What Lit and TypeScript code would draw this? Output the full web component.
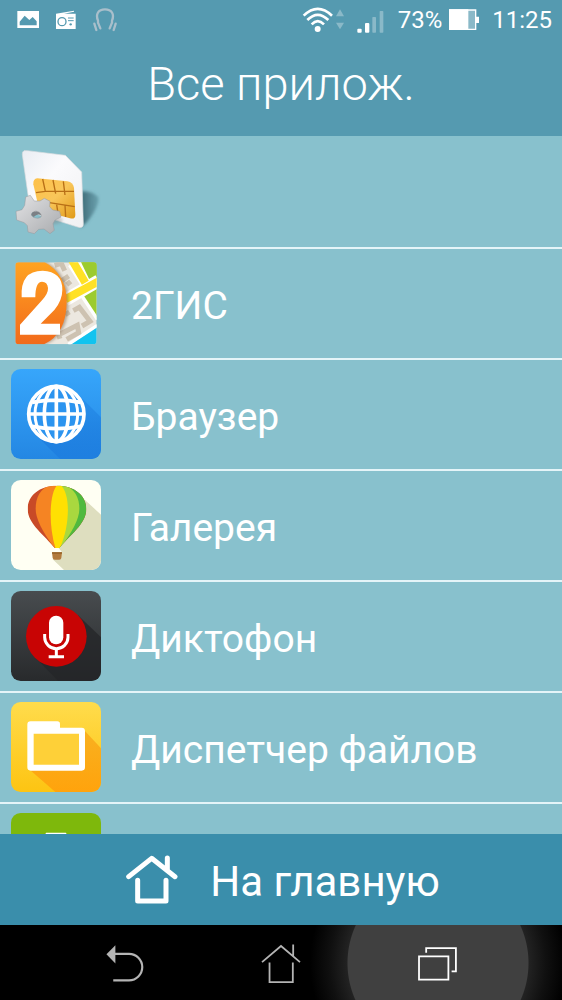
import { LitElement, html, css, TemplateResult } from "lit";
import { customElement } from "lit/decorators.js";

interface AppEntry {
  name: string;
  label?: string;
  icon: TemplateResult;
}

const simIcon = html`<svg viewBox="33 33 270 270" aria-hidden="true">
  <defs>
    <linearGradient id="sg" x1="0" y1="0" x2="1" y2="1"><stop offset="0" stop-color="#fdc14a" /><stop offset=".5" stop-color="#f9c65a" /><stop offset="1" stop-color="#e09a18" /></linearGradient>
    <linearGradient id="sc" x1="0" y1="0" x2="1" y2="1"><stop offset="0" stop-color="#e9edf3" /><stop offset=".4" stop-color="#fbfbfd" /><stop offset="1" stop-color="#f0f0f2" /></linearGradient>
    <linearGradient id="sh" x1="0" y1="0" x2="1" y2="0"><stop offset="0" stop-color="#35616d" stop-opacity=".95" /><stop offset="1" stop-color="#4c7f8d" stop-opacity=".5" /></linearGradient>
    <linearGradient id="gr" x1="0" y1="0" x2="1" y2="1"><stop offset="0" stop-color="#e3e3e5" /><stop offset="1" stop-color="#a9abae" /></linearGradient>
    <filter id="bl" x="-20%" y="-20%" width="140%" height="140%"><feGaussianBlur stdDeviation="4" /></filter>
  </defs>
  <path d="M244 166 Q278 164 295 184 Q298 202 280 232 Q262 262 240 275Z" fill="url(#sh)" filter="url(#bl)" />
  <path d="M72 44 Q66 47 67 56 L88 205 Q90 226 106 233 L236 274 Q250 277 250 264 L245 108 L196 58 L82 44Z" fill="url(#sc)" stroke="#d9dde0" stroke-width="2" />
  <path d="M112 127 L202 136 Q220 139 222 156 L226 236 Q226 251 210 247 L140 228 Q118 222 114 206 L100 145 Q99 128 112 127Z" fill="url(#sg)" />
  <path d="M128 129 L136 166 H222 M159 132 L167 173 M190 136 L195 177 M136 166 L108 170 M148 200 L224 212 M170 206 L174 232 M195 208 L197 243" fill="none" stroke="#b86f16" stroke-width="4" />
  <ellipse cx="150" cy="252" rx="38" ry="14" fill="#777" opacity=".35" filter="url(#bl)" />
  <path fill-rule="evenodd" fill="url(#gr)" stroke="#96999c" stroke-width="1.5" d="M77 183 L91 178 L103 195 L120 195 L133 187 L150 196 L149 212 L158 222 L179 226 L183 243 L165 252 L159 263 L163 283 L150 293 L132 279 L116 280 L103 293 L84 288 L82 269 L73 260 L50 252 L48 226 L66 221 L74 208Z M94 237 Q98 247 113 247 Q126 245 124 236 Q119 225 107 225 Q94 228 94 237Z" />
  <path d="M94 237 Q95 226 109 226 Q121 228 124 238 Q112 231 101 243 Z" fill="#7c8085" />
</svg>`;

const gisIcon = html`<svg viewBox="33 24 270 270" aria-hidden="true">
  <defs>
    <clipPath id="gc"><rect x="46" y="37" width="244" height="246" rx="10" /></clipPath>
    <linearGradient id="go" x1="0" y1="0" x2="0" y2="1"><stop offset="0" stop-color="#ffa321" /><stop offset="1" stop-color="#f26a1b" /></linearGradient>
    <filter id="gb"><feGaussianBlur stdDeviation="5" /></filter>
  </defs>
  <g clip-path="url(#gc)">
    <rect x="46" y="37" width="244" height="246" fill="#ece8e0" />
    <path d="M228 37 H290 V88 L268 96Z M290 106 V206 L248 142Z" fill="#9ccb2f" />
    <path d="M222 37 L262 100 L290 80" fill="none" stroke="#fff" stroke-width="42" />
    <path d="M240 30 H300 V84 L272 97Z" fill="#9ccb2f" />
    <path d="M196 150 L296 92" stroke="#fff" stroke-width="38" />
    <path d="M216 30 L256 98 M196 148 L296 94" fill="none" stroke="#ffe126" stroke-width="24" />
    <path d="M246 138 L292 208" stroke="#fff" stroke-width="10" />
    <path d="M212 283 L290 232 V283Z" fill="#12c3ef" />
    <path d="M205 283 L292 226" stroke="#fff" stroke-width="10" />
    <g fill="none" stroke="#cdc2b1" stroke-width="15">
      <path d="M164 46 L184 40 L194 62 M186 92 L206 78 M200 104 L212 94" />
      <path d="M220 182 L238 172 L270 214 L246 228 M180 266 L176 254 L232 226 L236 248 L200 268 M206 196 L198 184" />
    </g>
    <path d="M46 37 H138 A112 124 0 0 1 206 155 Q206 250 138 283 H46Z" fill="#6b5035" opacity=".45" filter="url(#gb)" />
    <path d="M46 37 H134 A112 124 0 0 1 200 155 Q200 250 132 283 H46Z" fill="url(#go)" />
    <path d="M65 142 Q60 62 128 62 Q187 65 187 119 Q187 151 163 180 L122 221 H180 V254 H60 V224 L126 151 Q145 130 144 114 Q142 95 126 95 Q106 96 106 142Z" fill="#fff" />
  </g>
</svg>`;

const browserIcon = html`<svg viewBox="33 27 270 270" aria-hidden="true">
  <defs>
    <linearGradient id="bb" x1="0" y1="0" x2="0" y2="1"><stop offset="0" stop-color="#37a6fb" /><stop offset="1" stop-color="#2487e3" /></linearGradient>
    <linearGradient id="bs" x1="0" y1="0" x2="0" y2="1"><stop offset="0" stop-color="#1d7fe0" stop-opacity=".35" /><stop offset="1" stop-color="#1f7fe0" /></linearGradient>
    <clipPath id="bc"><rect x="33" y="27" width="270" height="270" rx="29" /></clipPath>
  </defs>
  <g clip-path="url(#bc)">
    <rect x="33" y="27" width="270" height="270" fill="url(#bb)" />
    <path d="M231 100 L303 172 V297 H180 L107 224Z" fill="url(#bs)" />
    <circle cx="169" cy="162" r="83" fill="#2c94ef" />
    <g fill="none" stroke="#fff" stroke-width="11">
      <circle cx="169" cy="162" r="83" />
      <ellipse cx="169" cy="162" rx="36" ry="83" />
      <ellipse cx="169" cy="162" rx="64" ry="83" stroke-width="9" />
      <path d="M169 79 V245 M86 162 H252 M96 127 Q169 114 242 127 M96 199 Q169 213 242 199" />
    </g>
  </g>
</svg>`;

const galleryIcon = html`<svg viewBox="33 30 270 270" aria-hidden="true">
  <defs>
    <clipPath id="lc"><rect x="33" y="30" width="270" height="270" rx="29" /></clipPath>
    <clipPath id="lb"><path d="M171 47 C224 47 259 77 259 117 C259 163 207 197 178 234 H164 C136 197 83 163 83 117 C83 77 118 47 171 47Z" /></clipPath>
  </defs>
  <g clip-path="url(#lc)">
    <rect x="33" y="30" width="270" height="270" fill="#fffff3" />
    <path d="M255 90 L303 134 V300 H192 L158 268 L186 247 L176 234Z" fill="#dedebf" />
    <g clip-path="url(#lb)">
      <rect x="80" y="40" width="190" height="200" fill="#c84a27" />
      <path d="M171 40 Q107 50 107 117 Q107 160 168 240 H185 V40Z" fill="#f58423" />
      <path d="M171 40 H270 V240 H171Z" fill="#4fb93e" />
      <path d="M171 40 Q238 50 238 117 Q238 160 176 240 H171Z" fill="#a9d83f" />
      <path d="M177 42 C148 55 143 165 168 240 H177 C213 165 212 60 177 42Z" fill="#ffe002" />
    </g>
    <path d="M156 247 H186 L184 264 Q183 269 178 269 H164 Q159 269 158 264Z" fill="#b27a3c" />
    <path d="M156 247 H186 V251 H156Z" fill="#966329" />
  </g>
</svg>`;

const micIcon = html`<svg viewBox="33 33 270 270" aria-hidden="true">
  <defs>
    <linearGradient id="mb" x1="0" y1="0" x2="0" y2="1"><stop offset="0" stop-color="#484c4f" /><stop offset="1" stop-color="#282a2c" /></linearGradient>
    <clipPath id="mc"><rect x="33" y="33" width="270" height="270" rx="29" /></clipPath>
  </defs>
  <g clip-path="url(#mc)">
    <rect x="33" y="33" width="270" height="270" fill="url(#mb)" />
    <path d="M234 106 L303 172 V303 H175 L105 232Z" fill="#242628" opacity=".75" />
    <circle cx="169" cy="169" r="91" fill="#c80404" />
    <rect x="147" y="107" width="43" height="86" rx="21" fill="#fff" />
    <path d="M134 162 V172 A35 34 0 0 0 204 172 V162" fill="none" stroke="#fff" stroke-width="9" />
    <path d="M169 205 V230 M146 230 H192" stroke="#fff" stroke-width="9" />
  </g>
</svg>`;

const filesIcon = html`<svg viewBox="33 36 270 270" aria-hidden="true">
  <defs>
    <linearGradient id="fb" x1="0" y1="0" x2="0" y2="1"><stop offset="0" stop-color="#ffdc4c" /><stop offset="1" stop-color="#fdc412" /></linearGradient>
    <linearGradient id="fs" x1="0" y1="0" x2="0" y2="1"><stop offset="0" stop-color="#f9b120" /><stop offset="1" stop-color="#ffa30c" /></linearGradient>
    <clipPath id="fc"><rect x="33" y="36" width="270" height="270" rx="29" /></clipPath>
  </defs>
  <g clip-path="url(#fc)">
    <rect x="33" y="36" width="270" height="270" fill="url(#fb)" />
    <path d="M252 120 L303 175 V306 H166 L90 240Z" fill="url(#fs)" />
    <rect x="98" y="128" width="142" height="100" fill="#fed038" />
    <path fill-rule="evenodd" fill="#fff" d="M92 94 H172 Q180 94 180 102 V113 H245 Q255 113 255 123 V232 Q255 242 245 242 H92 Q82 242 82 232 V104 Q82 94 92 94Z M101 131 V224 H237 V131Z" />
  </g>
</svg>`;

const greenIcon = html`<svg viewBox="33 369 270 270" aria-hidden="true">
  <rect x="33" y="369" width="270" height="270" rx="29" fill="#7eb80c" />
  <rect x="137" y="428" width="62" height="12" rx="2" fill="#fff" />
</svg>`;

const apps: AppEntry[] = [
  { name: "", label: "SIM", icon: simIcon },
  { name: "2ГИС", icon: gisIcon },
  { name: "Браузер", icon: browserIcon },
  { name: "Галерея", icon: galleryIcon },
  { name: "Диктофон", icon: micIcon },
  { name: "Диспетчер файлов", icon: filesIcon },
  { name: "", label: "Приложение", icon: greenIcon },
];

@customElement("status-bar")
class StatusBar extends LitElement {
  static styles = css`
    :host {
      display: flex;
      align-items: center;
      justify-content: space-between;
      height: 40px;
      padding: 0 10px 0 16px;
      font-size: 24px;
      line-height: 40px;
    }
    .group {
      display: flex;
      align-items: center;
    }
    .notices {
      gap: 14px;
    }
    .system {
      gap: 7px;
    }
    .clock {
      margin-left: 6px;
    }
    svg {
      display: block;
      height: 26px;
    }
  `;

  render() {
    return html`
      <div class="group notices">
        <svg width="24" viewBox="48 21 72 78" aria-hidden="true">
          <path fill="#fff" fill-rule="evenodd" d="M52 33 H117 V84 H52Z M59 76 H110 V64 L98 51 L88 60 L74 47 L59 65Z" />
        </svg>
        <svg width="24" viewBox="162 21 72 78" aria-hidden="true">
          <path fill="#fff" d="M168 41 L222 32 V35 L192 41 H227 V87 H168Z" />
          <circle cx="186" cy="65" r="12" fill="none" stroke="#559ab0" stroke-width="4" />
          <path d="M204 54 H221 M204 62 H221" stroke="#559ab0" stroke-width="3" />
          <circle cx="212" cy="73" r="3.5" fill="#559ab0" />
        </svg>
        <svg width="26" viewBox="271 21 78 78" aria-hidden="true">
          <g fill="none" stroke="#a9bfcb" stroke-width="7" stroke-linecap="round">
            <path d="M296 85 L289 68 M289 62 C281 42 290 28 310 28 C330 28 339 42 331 62 M331 68 L324 85 M278 71 L284 90 M342 71 L336 90 M289 62 L289 68 M331 62 L331 68" />
          </g>
        </svg>
      </div>
      <div class="group system">
        <svg width="42" viewBox="62 21 126 78" aria-hidden="true">
          <g fill="none" stroke="#fff" stroke-width="8">
            <path d="M67 47 Q109 6 152 47 M78 60 Q109 29 141 60 M91 73 Q109 54 128 73" />
          </g>
          <circle cx="109" cy="87" r="9" fill="#fff" />
          <path d="M164 49 L176 28 L188 49Z M164 68 H188 L176 88Z" fill="#8ab9c8" />
        </svg>
        <svg width="40" viewBox="210 21 120 78" aria-hidden="true">
          <rect x="229" y="86" width="13" height="12" rx="3" fill="#fff" />
          <rect x="252" y="69" width="13" height="29" rx="3" fill="#fff" />
          <rect x="274" y="51" width="11" height="47" rx="2" fill="#8ab9c8" />
          <rect x="296" y="33" width="11" height="65" rx="2" fill="#8ab9c8" />
        </svg>
        <span>73%</span>
        <svg width="30" viewBox="504 21 90 78" aria-hidden="true">
          <path d="M506 30 H584 V88 H506Z" fill="#8ab9c8" stroke="#fff" stroke-width="4" />
          <path d="M504 28 H562 V90 H504Z M584 50 H594 V69 H584Z" fill="#fff" />
        </svg>
        <time class="clock">11:25</time>
      </div>
    `;
  }
}

@customElement("nav-bar")
class NavBar extends LitElement {
  static styles = css`
    :host {
      display: block;
      background: #000;
      overflow: hidden;
    }
    nav {
      display: flex;
      justify-content: center;
      height: 75px;
    }
    button {
      display: flex;
      align-items: center;
      justify-content: center;
      position: relative;
      width: 28%;
      border: 0;
      padding: 0 0 4px;
      background: none;
      color: #b4b4b4;
    }
    .active {
      color: #fff;
    }
    .active::before {
      content: "";
      position: absolute;
      left: 50%;
      top: 50%;
      width: 260px;
      height: 260px;
      transform: translate(-50%, -50%);
      background: radial-gradient(circle closest-side, #404040 90px, #222 91px, #101010 108px, #000 128px);
    }
    svg {
      position: relative;
      display: block;
      width: 48px;
      height: 48px;
      fill: none;
      stroke: currentColor;
    }
  `;

  render() {
    return html`
      <nav>
        <button type="button" aria-label="Назад">
          <svg viewBox="279 52 134 134">
            <path d="M297 100 L322 75 V126Z" fill="currentColor" stroke="none" />
            <path d="M320 99 H360 A37 37 0 0 1 360 173 H316" stroke-width="6" />
          </svg>
        </button>
        <button type="button" aria-label="Домой">
          <svg viewBox="717 52 134 134" stroke-width="5">
            <path d="M731 122 L784 77 L837 122 M818 73 V104 M752 123 V178 H817 V123" />
          </svg>
        </button>
        <button type="button" class="active" aria-label="Недавние">
          <svg viewBox="1155 52 134 134" stroke-width="5">
            <path d="M1169 106 H1251 V171 H1169Z M1189 96 V83 H1272 V148 H1260" />
          </svg>
        </button>
      </nav>
    `;
  }
}

@customElement("app-root")
class AppRoot extends LitElement {
  static styles = css`
    :host {
      display: flex;
      flex-direction: column;
      height: 100vh;
      font-family: Roboto, "Noto Sans", sans-serif;
      color: #fff;
      background: #88c1cd;
    }
    header {
      height: 136px;
      flex: none;
      background: #559ab0;
    }
    h1 {
      margin: 0;
      padding-top: 12px;
      font-size: 47px;
      line-height: 64px;
      font-weight: 300;
      text-align: center;
    }
    .list {
      flex: 1;
      min-height: 0;
      overflow: hidden;
      margin: 0;
      padding: 2px 0 0;
      list-style: none;
    }
    .row {
      display: flex;
      align-items: center;
      gap: 30px;
      padding: 9px 11px 10px;
      border-bottom: 2px solid #e4f4f8;
      color: inherit;
      text-decoration: none;
      font-size: 39px;
      line-height: 48px;
    }
    .row span {
      padding-top: 6px;
    }
    .row svg {
      display: block;
      flex: none;
      width: 90px;
      height: 90px;
    }
    .home {
      display: flex;
      flex: none;
      align-items: center;
      justify-content: center;
      gap: 32px;
      height: 91px;
      border: 0;
      padding: 0 0 0 4px;
      background: #3a8eab;
      color: inherit;
      font: inherit;
      font-size: 42px;
      line-height: 48px;
    }
    .home span {
      padding-top: 4px;
    }
    .home svg {
      display: block;
      width: 52px;
      height: 52px;
    }
    nav-bar {
      flex: none;
    }
  `;

  render() {
    return html`
      <header>
        <status-bar></status-bar>
        <h1>Все прилож.</h1>
      </header>
      <ul class="list">
        ${apps.map(
          (app) => html`<li>
            <a class="row" href="#" aria-label=${app.name || app.label}>${app.icon}<span>${app.name}</span></a>
          </li>`
        )}
      </ul>
      <button type="button" class="home">
        <svg viewBox="108 70 156 156" aria-hidden="true">
          <path d="M116 138 L185 83 L255 138 M232 82 V116 M143 149 V211 H228 V149" fill="none" stroke="#fff" stroke-width="15" stroke-linecap="round" stroke-linejoin="round" />
        </svg>
        <span>На главную</span>
      </button>
      <nav-bar></nav-bar>
    `;
  }
}
